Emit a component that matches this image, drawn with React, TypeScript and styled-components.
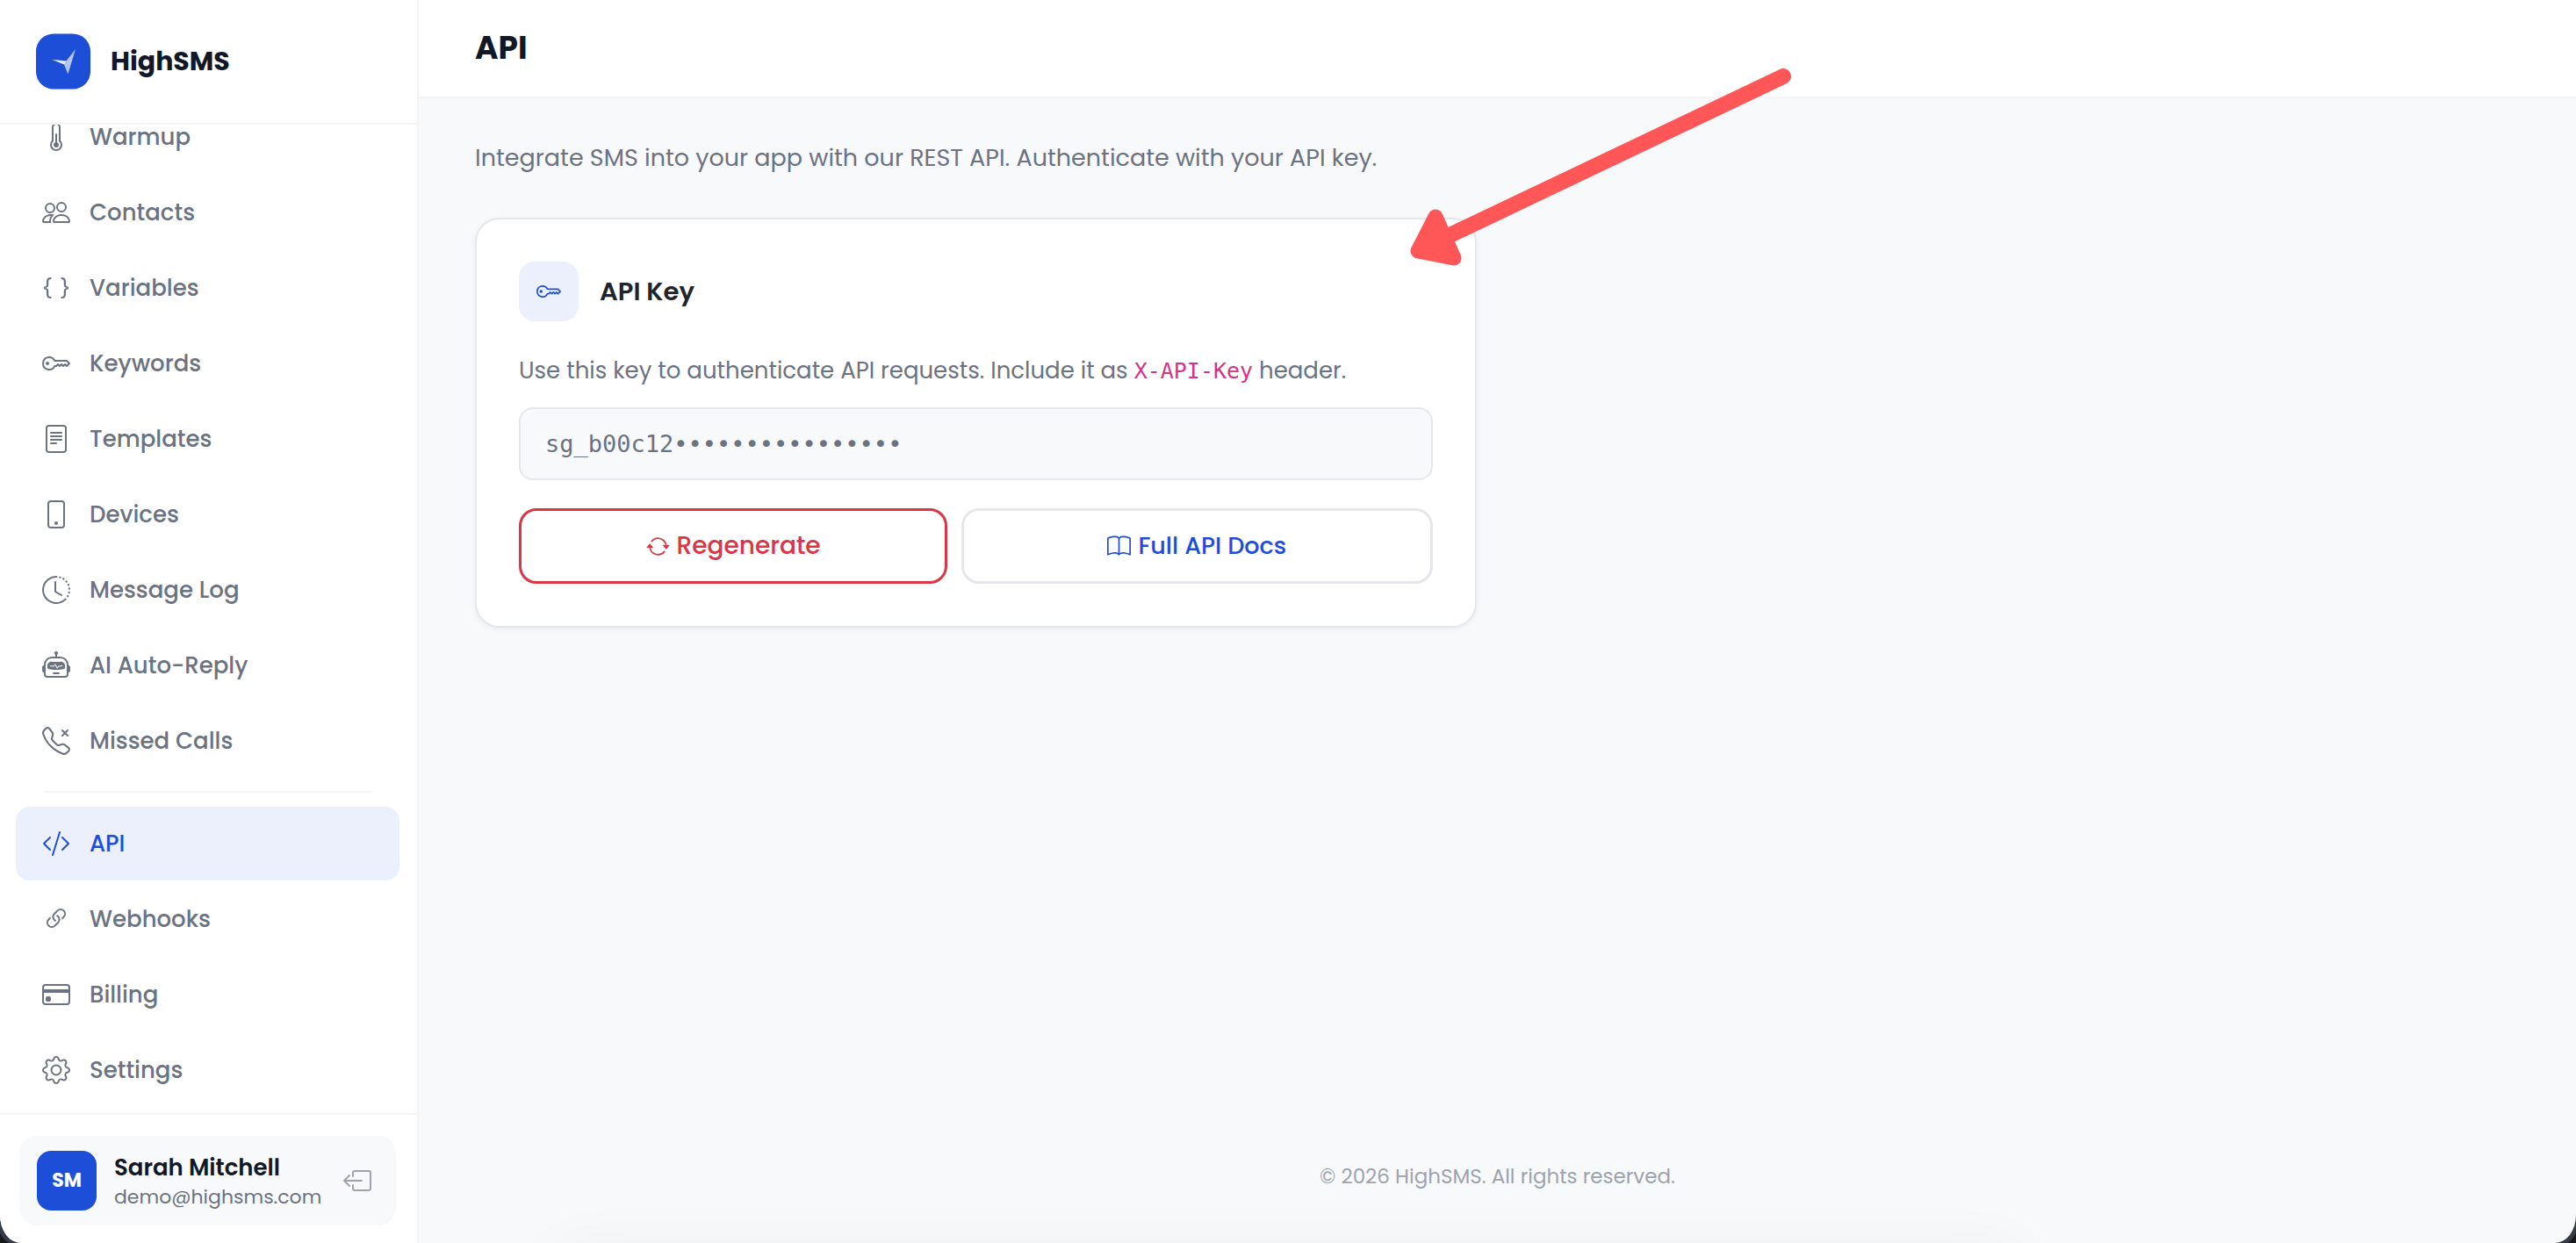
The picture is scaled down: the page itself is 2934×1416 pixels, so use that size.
import React from 'react';
import styled, { createGlobalStyle, css } from 'styled-components';
import {
  BsThermometerHalf, BsPeople, BsBraces, BsKey, BsFileText, BsPhone, BsClockHistory, BsRobot,
  BsTelephoneX, BsCodeSlash, BsLink45Deg, BsCreditCard, BsGear, BsBoxArrowLeft, BsArrowRepeat, BsBook,
} from 'react-icons/bs';
import type { IconType } from 'react-icons';

const color = {
  brand: '#1d4ed8',
  brandSoft: '#ebf0fc',
  ink: '#111827',
  text: '#6b7280',
  faint: '#9ca3af',
  line: '#e5e7eb',
  hairline: '#f3f4f6',
  page: '#f8f9fb',
  danger: '#dc3545',
  code: '#d63384',
};

const mono = 'Menlo, "DejaVu Sans Mono", "Liberation Mono", monospace';

const GlobalStyle = createGlobalStyle`
  *, *::before, *::after { box-sizing: border-box; }
  body {
    margin: 0;
    background: #16181b;
    color: ${color.text};
    font-family: Poppins, Inter, "Liberation Sans", sans-serif;
    font-size: 26px;
    line-height: 40px;
  }
  h1, h2, p { margin: 0; }
  button, input { font: inherit; }
`;

const Window = styled.div`
  position: relative;
  display: flex;
  height: 100vh;
  overflow: hidden;
  background: ${color.page};
  border-radius: 0 0 24px 24px / 0 0 32px 32px;
  box-shadow: 0 0 0 5px #343b46;
`;

const Sidebar = styled.aside`
  display: flex;
  flex: none;
  flex-direction: column;
  width: 477px;
  background: #fff;
  border-right: 2px solid ${color.hairline};
`;

const Brand = styled.a`
  display: flex;
  flex: none;
  align-items: center;
  gap: 22px;
  height: 142px;
  padding: 0 40px;
  border-bottom: 2px solid ${color.hairline};
  color: ${color.ink};
  font-size: 30px;
  font-weight: 700;
  text-decoration: none;
`;

const Nav = styled.nav`
  display: flex;
  flex: 1;
  flex-direction: column;
  justify-content: flex-end;
  gap: 2px;
  min-height: 0;
  overflow: hidden;
  padding: 0 20px 7px 18px;
`;

const NavLink = styled.a<{ $active?: boolean }>`
  display: flex;
  flex: none;
  align-items: center;
  gap: 22px;
  height: 84px;
  padding: 0 30px;
  border-radius: 16px;
  color: ${color.text};
  font-weight: 500;
  line-height: 26px;
  text-decoration: none;

  svg { flex: none; width: 32px; height: 32px; }

  ${(p) => p.$active && css`
    background: ${color.brandSoft};
    color: ${color.brand};
  `}
`;

const Divider = styled.hr`
  flex: none;
  width: 374px;
  height: 2px;
  margin: 13px auto 14px;
  border: 0;
  background: ${color.hairline};
`;

const Account = styled.div`
  flex: none;
  padding: 24px 24px 20px 22px;
  border-top: 2px solid ${color.hairline};
`;

const AccountCard = styled.div`
  display: flex;
  align-items: center;
  gap: 20px;
  height: 102px;
  padding: 0 28px 0 20px;
  border-radius: 20px;
  background: ${color.page};
`;

const Avatar = styled.span`
  display: flex;
  flex: none;
  align-items: center;
  justify-content: center;
  width: 68px;
  height: 68px;
  border-radius: 16px;
  background: ${color.brand};
  color: #fff;
  font-size: 22px;
  font-weight: 700;
`;

const Identity = styled.div`
  flex: 1;
  min-width: 0;
  padding-top: 3px;
  line-height: 34px;
  white-space: nowrap;
`;

const Name = styled.div`
  color: ${color.ink};
  font-weight: 600;
`;

const Email = styled.div`
  font-size: 22px;
`;

const IconButton = styled.button`
  display: flex;
  flex: none;
  padding: 0;
  border: 0;
  background: none;
  color: ${color.faint};

  svg { width: 32px; height: 32px; }
`;

const Main = styled.main`
  display: flex;
  flex: 1;
  flex-direction: column;
  min-width: 0;
`;

const TopBar = styled.header`
  display: flex;
  flex: none;
  align-items: center;
  height: 112px;
  padding: 0 64px;
  border-bottom: 2px solid ${color.hairline};
  background: #fff;
`;

const PageTitle = styled.h1`
  color: ${color.ink};
  font-size: 36px;
  font-weight: 700;
`;

const Content = styled.div`
  display: flex;
  flex: 1;
  flex-direction: column;
  gap: 48px;
  padding: 48px 64px;
`;

const Lead = styled.p`
  font-size: 27px;
`;

const Columns = styled.div`
  display: grid;
  grid-template-columns: 1fr 1fr;
  gap: 48px;
`;

const Card = styled.section`
  position: relative;
  display: flex;
  flex-direction: column;
  padding: 48px;
  border: 2px solid ${color.line};
  border-radius: 28px;
  background: #fff;
  box-shadow: 0 2px 6px rgba(0, 0, 0, 0.06);
`;

const CardHead = styled.div`
  display: flex;
  align-items: center;
  gap: 24px;
  margin-bottom: 36px;
`;

const CardBadge = styled.span`
  display: flex;
  align-items: center;
  justify-content: center;
  width: 68px;
  height: 68px;
  border-radius: 18px;
  background: ${color.brandSoft};
  color: ${color.brand};

  svg { width: 28px; height: 28px; }
`;

const CardTitle = styled.h2`
  color: #212529;
  font-size: 29px;
  font-weight: 600;
`;

const Hint = styled.label`
  margin-bottom: 22px;
`;

const Code = styled.code`
  color: ${color.code};
  font-family: ${mono};
  font-size: 25px;
  line-height: 24px;
`;

const KeyField = styled.input`
  width: 100%;
  height: 83px;
  margin-bottom: 32px;
  padding: 0 28px;
  border: 2px solid ${color.line};
  border-radius: 16px;
  background: ${color.page};
  color: ${color.text};
  font-family: ${mono};
  font-size: 27px;
`;

const Actions = styled.div`
  display: flex;
  gap: 16px;
`;

const actionStyle = css`
  display: flex;
  align-items: center;
  justify-content: center;
  gap: 8px;
  height: 86px;
  padding: 0 24px;
  border: 3px solid;
  border-radius: 20px;
  background: #fff;
  font-weight: 500;

  svg { width: 27px; height: 27px; }
`;

const RegenerateButton = styled.button`
  ${actionStyle}
  flex: 9 1 0;
  border-color: ${color.danger};
  color: ${color.danger};
  font-size: 28px;
`;

const DocsLink = styled.a`
  ${actionStyle}
  flex: 10 1 0;
  border-color: ${color.line};
  color: ${color.brand};
  font-size: 27px;
  text-decoration: none;
`;

const Pointer = styled.svg`
  position: absolute;
  z-index: 1;
  top: -172px;
  right: -362px;
  width: 440px;
  height: 232px;
  pointer-events: none;
`;

const Footer = styled.footer`
  flex: none;
  padding: 56px 64px;
  color: ${color.faint};
  font-size: 23px;
  text-align: center;
`;

const BottomShade = styled.div`
  position: absolute;
  bottom: -60px;
  left: 630px;
  right: 630px;
  height: 50px;
  border-radius: 25px;
  box-shadow: 0 0 70px rgba(0, 0, 0, 0.05);
  pointer-events: none;
`;

type Entry = { label: string; icon: IconType; active?: boolean };

const primary: Entry[] = [
  { label: 'Warmup', icon: BsThermometerHalf },
  { label: 'Contacts', icon: BsPeople },
  { label: 'Variables', icon: BsBraces },
  { label: 'Keywords', icon: BsKey },
  { label: 'Templates', icon: BsFileText },
  { label: 'Devices', icon: BsPhone },
  { label: 'Message Log', icon: BsClockHistory },
  { label: 'AI Auto-Reply', icon: BsRobot },
  { label: 'Missed Calls', icon: BsTelephoneX },
];

const secondary: Entry[] = [
  { label: 'API', icon: BsCodeSlash, active: true },
  { label: 'Webhooks', icon: BsLink45Deg },
  { label: 'Billing', icon: BsCreditCard },
  { label: 'Settings', icon: BsGear },
];

const renderEntry = ({ label, icon: Icon, active }: Entry) => (
  <NavLink key={label} href="#" $active={active} aria-current={active ? 'page' : undefined}>
    <Icon />
    {label}
  </NavLink>
);

const Logo = () => (
  <svg width="64" height="64" viewBox="0 0 64 64" aria-hidden="true">
    <rect x="1" y="0.5" width="62" height="63" rx="20" fill={color.brand} />
    <path d="M19 29.700 36 31.500 33.700 35.700z" fill="#e3e9fb" />
    <path d="M46 18 35 32 33 35.500 37.400 46.500 40 38z" fill="#b4c4f3" />
  </svg>
);

export default function App() {
  return (
    <>
      <GlobalStyle />
      <Window>
        <Sidebar>
          <Brand href="#">
            <Logo />
            HighSMS
          </Brand>
          <Nav>
            {primary.map(renderEntry)}
            <Divider />
            {secondary.map(renderEntry)}
          </Nav>
          <Account>
            <AccountCard>
              <Avatar>SM</Avatar>
              <Identity>
                <Name>Sarah Mitchell</Name>
                <Email>demo@highsms.com</Email>
              </Identity>
              <IconButton type="button" aria-label="Log out">
                <BsBoxArrowLeft />
              </IconButton>
            </AccountCard>
          </Account>
        </Sidebar>
        <Main>
          <TopBar>
            <PageTitle>API</PageTitle>
          </TopBar>
          <Content>
            <Lead>Integrate SMS into your app with our REST API. Authenticate with your API key.</Lead>
            <Columns>
              <Card>
                <CardHead>
                  <CardBadge>
                    <BsKey />
                  </CardBadge>
                  <CardTitle>API Key</CardTitle>
                </CardHead>
                <Hint htmlFor="api-key">
                  Use this key to authenticate API requests. Include it as <Code>X-API-Key</Code> header.
                </Hint>
                <KeyField id="api-key" readOnly value="sg_b00c12••••••••••••••••" />
                <Actions>
                  <RegenerateButton type="button">
                    <BsArrowRepeat />
                    Regenerate
                  </RegenerateButton>
                  <DocsLink href="#">
                    <BsBook />
                    Full API Docs
                  </DocsLink>
                </Actions>
                <Pointer viewBox="0 0 440 232" fill="#ff5757" stroke="#ff5757" aria-hidden="true">
                  <path d="M43 193 429 9" strokeWidth="18" strokeLinecap="round" fill="none" />
                  <path d="M33 169 13 208 54 216z" strokeWidth="17" strokeLinejoin="round" />
                </Pointer>
              </Card>
            </Columns>
          </Content>
          <Footer>© 2026 HighSMS. All rights reserved.</Footer>
        </Main>
        <BottomShade />
      </Window>
    </>
  );
}
